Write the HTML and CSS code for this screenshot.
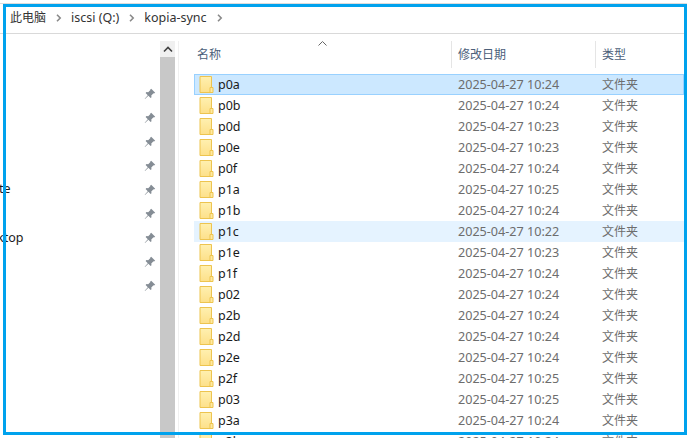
FILE: index.html
```html
<!DOCTYPE html>
<html lang="zh">
<head>
<meta charset="utf-8">
<title>kopia-sync</title>
<link rel="stylesheet" href="styles.css">
</head>
<body>
<svg class="defs" width="0" height="0" aria-hidden="true">
  <defs>
    <linearGradient id="fg" x1="0" y1="0" x2="0" y2="1"><stop offset="0" stop-color="#fff0b0"/><stop offset="1" stop-color="#fde08a"/></linearGradient>
    <symbol id="folder" viewBox="0 0 14 17">
      <path d="M.5.5h11.500v16H.5z" fill="url(#fg)" stroke="#edc44f"/>
      <path d="M10.500 11.500h3v5h-3z" fill="#ffe9a0" stroke="#edc44f"/>
    </symbol>
    <symbol id="pin" viewBox="0 0 12 12">
      <path d="M7.200.8l4 4-1.200.7-.5-.2-2.200 2.200.2 1.700-.9.9-2.200-2.300L1 11l-.3-.3 3.100-3.500-2.200-2.200.9-.9 1.700.2 2.200-2.200-.2-.5z" fill="#858d95"/>
    </symbol>
    <symbol id="chev" viewBox="0 0 6 8">
      <path d="M1 .8L4.200 4 1 7.200" fill="none" stroke="#8a8a8a" stroke-width="1.600"/>
    </symbol>
  </defs>
</svg>
<div class="window">
  <nav class="crumbs">
    <span>此电脑</span><svg class="chev"><use href="#chev"/></svg>
    <span class="latin">iscsi (Q:)</span><svg class="chev"><use href="#chev"/></svg>
    <span class="latin">kopia-sync</span><svg class="chev"><use href="#chev"/></svg>
  </nav>
  <div class="body">
    <aside class="side">
      <div class="pins" id="pins"></div>
      <div class="cut cut-a">te</div>
      <div class="cut cut-b">ktop</div>
    </aside>
    <div class="scroll">
      <div class="arrow"><svg width="10" height="7" viewBox="0 0 10 7"><path d="M1 5.500L5 1.500l4 4" fill="none" stroke="#404040" stroke-width="1.600"/></svg></div>
      <div class="thumb"></div>
    </div>
    <main class="list">
      <div class="sort"><svg width="9" height="5" viewBox="0 0 9 5"><path d="M.5 4.500L4.500.5l4 4" fill="none" stroke="#666"/></svg></div>
      <header class="head">
        <div class="h name">名称</div>
        <div class="h date">修改日期</div>
        <div class="h type">类型</div>
      </header>
      <div class="rows" id="rows"></div>
    </main>
  </div>
</div>
<div class="frame"></div>
<script src="app.js"></script>
</body>
</html>
```

FILE: styles.css
```css
* { box-sizing: border-box; }
html, body { margin: 0; height: 100%; overflow: hidden; background: #fff; }
body { font: 12px/16px "Noto Sans", "Noto Sans CJK SC", sans-serif; color: #1a1a1a; }
.defs { position: absolute; }
.window { height: 438px; padding-top: 3px; display: flex; flex-direction: column; }
.window::before { content: ""; height: 1px; background: #dcdcdc; }
.crumbs { height: 30px; flex: none; display: flex; align-items: center; padding: 0 0 2px 10px; border-bottom: 1px solid #d9d9d9; color: #333; }
.crumbs span { line-height: 16px; }
.crumbs .latin { font-size: 12.500px; }
.chev { width: 6px; height: 8px; margin: 0 9px 0 10px; }
.body { flex: 1; display: flex; padding-top: 7px; min-height: 0; }
.side { width: 160px; flex: none; position: relative; }
.pins { display: flex; flex-direction: column; align-items: flex-end; gap: 12px; padding: 47px 4px 0 0; }
.pin { width: 12px; height: 12px; display: block; }
.cut { position: absolute; left: 0; line-height: 16px; font-size: 12.500px; }
.cut-a { top: 140px; left: -1px; }
.cut-b { top: 189px; left: -3px; }
.scroll { width: 15px; flex: none; background: #c8c8c8; }
.arrow { height: 16px; background: #f0f0f0; display: flex; align-items: center; justify-content: center; }
.list { flex: 1; min-width: 0; margin-left: 3px; border-left: 1px solid #f0f0f0; position: relative; padding-left: 15px; }
.sort { position: absolute; left: 139px; top: 0; line-height: 0; }
.head { height: 27px; display: flex; color: #4c607a; }
.h { display: flex; align-items: center; padding-left: 3px; border-right: 1px solid #e5e5e5; }
.h.name { width: 258px; }
.h.date { width: 144px; padding-left: 6px; }
.h.type { flex: 1; padding-left: 6px; border-right: 0; }
.rows { margin-top: 6px; }
.row { height: 21px; display: flex; align-items: center; border: 1px solid transparent; margin-right: 4px; width: 490px; white-space: nowrap; }
.row.sel { background: #cce8ff; border-color: #99d1ff; }
.row.hov { background: #e5f3ff; }
.folder { width: 15px; height: 17px; margin-left: 4px; flex: none; }
.n { width: 244px; padding-left: 4px; color: #1a1a1a; font-size: 12.500px; }
.d { width: 144px; color: #6d6d6d; font-size: 12.600px; }
.t { color: #6d6d6d; }
.frame { position: absolute; left: 3px; top: 4px; width: 684px; height: 431px; border: 3px solid #00a2ed; pointer-events: none; }
```

FILE: app.js
```js
const rows = [
  ["p0a","10:24"],["p0b","10:24"],["p0d","10:23"],["p0e","10:23"],["p0f","10:24"],
  ["p1a","10:25"],["p1b","10:24"],["p1c","10:22"],["p1e","10:23"],["p1f","10:24"],
  ["p02","10:24"],["p2b","10:24"],["p2d","10:24"],["p2e","10:24"],["p2f","10:25"],
  ["p03","10:25"],["p3a","10:24"],["p3b","10:24"]
];
document.getElementById("rows").innerHTML = rows.map(([n, t], i) => {
  const cls = i === 0 ? " sel" : i === 7 ? " hov" : "";
  return `<div class="row${cls}"><svg class="folder"><use href="#folder"/></svg><span class="n">${n}</span><span class="d">2025-04-27 ${t}</span><span class="t">文件夹</span></div>`;
}).join("");
document.getElementById("pins").innerHTML = Array(9).fill('<svg class="pin"><use href="#pin"/></svg>').join("");
```
